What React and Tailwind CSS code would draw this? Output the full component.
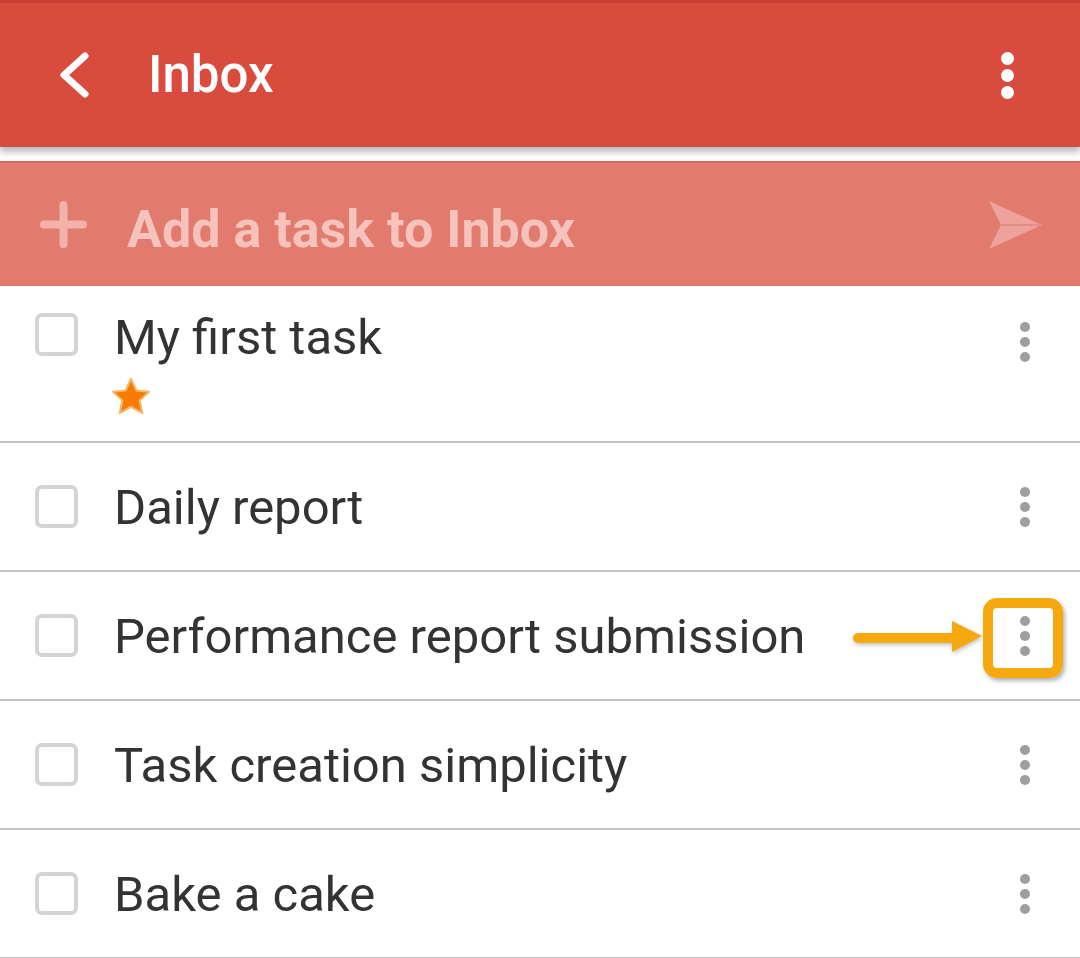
import React from "react";

const tasks = [
	{ id: 1, title: "My first task", starred: true },
	{ id: 2, title: "Daily report" },
	{ id: 3, title: "Performance report submission", highlight: true },
	{ id: 4, title: "Task creation simplicity" },
	{ id: 5, title: "Bake a cake" },
];

function Kebab({ className }) {
	return (
		<div className={`flex flex-col items-center gap-[5px] ${className}`}>
			<span className="w-[10px] h-[10px] rounded-full bg-[#9e9e9e]" />
			<span className="w-[10px] h-[10px] rounded-full bg-[#9e9e9e]" />
			<span className="w-[10px] h-[10px] rounded-full bg-[#9e9e9e]" />
		</div>
	);
}

function Star() {
	return (
		<svg width="46" height="46" viewBox="0 0 24 24">
			<path
				d="M12 2.5l2.8 6.1 6.6.7-4.9 4.5 1.4 6.6L12 17.1l-5.9 3.3 1.4-6.6-4.9-4.5 6.6-.7z"
				fill="#f57c00"
				stroke="#f7b66a"
				strokeWidth="1.1"
				strokeLinejoin="round"
			/>
		</svg>
	);
}

function Annotation() {
	return (
		<>
			{/* arrow pointing to the menu */}
			<svg
				className="absolute left-[850px] top-[43px] drop-shadow-[1px_2px_2px_rgba(0,0,0,0.25)]"
				width="136"
				height="44"
				viewBox="0 0 136 44"
			>
				<line x1="8" y1="23" x2="108" y2="23" stroke="#f6a90f" strokeWidth="10" strokeLinecap="round" />
				<polygon points="102,6 132,21 102,37" fill="#f6a90f" />
			</svg>
			<div className="absolute left-[983px] top-[26px] w-[80px] h-[80px] rounded-[14px] border-[10px] border-[#f6a90f] shadow-[2px_3px_4px_rgba(0,0,0,0.3)]" />
		</>
	);
}

function TaskRow({ task }) {
	return (
		<div
			className={`relative flex px-[35px] border-b-2 border-[#c4c4c4] ${
				task.starred ? "h-[157px] items-start pt-[27px]" : "h-[129px] items-center"
			}`}
		>
			<div className="w-[43px] h-[43px] rounded-[7px] border-[4px] border-[#d4d4d4] shrink-0" />
			<div className="flex flex-col ml-[36px] flex-1">
				<span
					className={`text-[49px] text-[#333333] leading-none ${task.starred ? "mt-[0px]" : "mt-[2px]"}`}
				>
					{task.title}
				</span>
				{task.starred && (
					<div className="mt-[12px] ml-[-6px]">
						<Star />
					</div>
				)}
			</div>
			<Kebab className={task.starred ? "mt-[9px] mr-[15px]" : "mr-[15px]"} />
			{task.highlight && <Annotation />}
		</div>
	);
}

export default function App() {
	return (
		<div className="w-[1080px] h-[958px] bg-white overflow-hidden" style={{ fontFamily: "Roboto, 'Noto Sans', sans-serif" }}>
			{/* Toolbar */}
			<div className="relative z-10 h-[147px] bg-[#d94b3d] border-t-[3px] border-[#c83e30] shadow-[0_5px_7px_rgba(0,0,0,0.28)] flex items-center px-[58px]">
				<svg width="32" height="46" viewBox="0 0 32 46">
					<path d="M27 4L6 23l21 19" fill="none" stroke="white" strokeWidth="7" strokeLinecap="round" strokeLinejoin="round" />
				</svg>
				<span className="ml-[58px] text-white text-[51px] font-medium leading-none mb-[2px]">Inbox</span>
				<div className="ml-auto mr-[8px] flex flex-col gap-[4px]">
					<span className="w-[13px] h-[13px] rounded-full bg-white" />
					<span className="w-[13px] h-[13px] rounded-full bg-white" />
					<span className="w-[13px] h-[13px] rounded-full bg-white" />
				</div>
			</div>

			{/* Add task bar */}
			<div className="mt-[14px] h-[125px] bg-[#e27a6e] border-t-2 border-[#d9685c] flex items-center pl-[40px] pr-[37px]">
				<svg width="47" height="47" viewBox="0 0 47 47">
					<path d="M23.5 4v39M4 23.5h39" stroke="#f2b2ab" strokeWidth="8" strokeLinecap="round" />
				</svg>
				<span className="ml-[40px] text-[52px] font-bold text-[#f6c2bc] leading-none mt-[10px]">
					Add a task to Inbox
				</span>
				<svg className="ml-auto" width="54" height="50" viewBox="0 0 54 50">
					<polygon points="0,1 53,25 0,49 12,25" fill="#eda39b" />
					<line x1="12" y1="25" x2="53" y2="25" stroke="#e38d84" strokeWidth="2" />
				</svg>
			</div>

			{/* Task list */}
			<div>
				{tasks.map((task) => (
					<TaskRow key={task.id} task={task} />
				))}
			</div>
		</div>
	);
}
